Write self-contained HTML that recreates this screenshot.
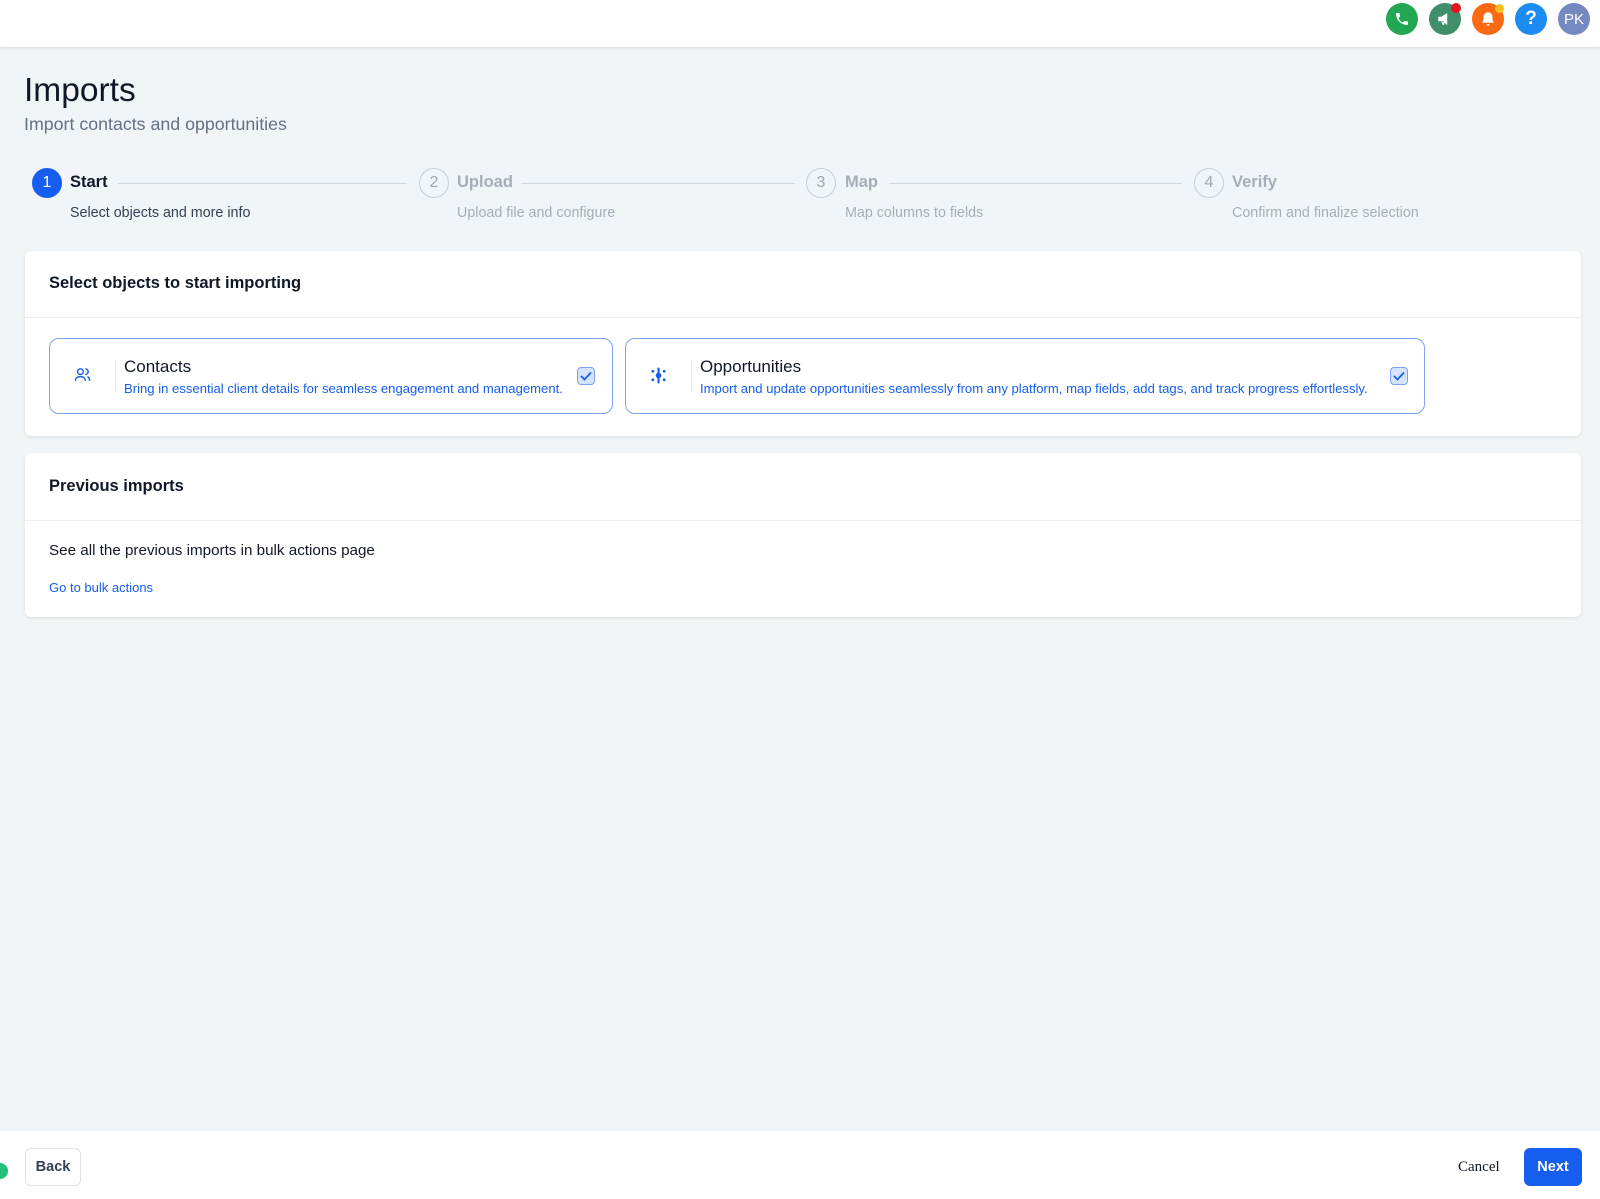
<!DOCTYPE html>
<html><head><meta charset="utf-8"><style>
*{box-sizing:border-box;margin:0;padding:0}
body{width:1600px;height:1199px;background:#f1f5f8;font-family:"Liberation Sans",sans-serif;position:relative;overflow:hidden;color:#101828}
.abs{position:absolute}
.hdr{left:0;top:0;width:1600px;height:47px;background:#fff;box-shadow:0 1px 3px rgba(0,0,0,.12)}
.ic{width:32px;height:32px;border-radius:50%;top:3px;display:flex;align-items:center;justify-content:center;color:#fff}
.step{top:168px;width:30px;height:30px;border-radius:50%;border:1.5px solid #c9ced6;color:#a0a7b2;font-size:16px;display:flex;align-items:center;justify-content:center}
.sl{top:173px;font-size:16.5px;color:#a8aeb8;font-weight:bold}
.ss{top:205px;font-size:14.3px;color:#a8aeb8}
.line{top:183px;height:1px;background:#d3d8de}
.card{background:#fff;border-radius:6px;box-shadow:0 1px 3px rgba(0,0,0,.1);left:25px;width:1556px}
.opt{top:338px;height:76px;border:1.3px solid #7da2f3;border-radius:10px;background:#fff}
.cb{width:18px;height:18px;border:1.3px solid #7da2f3;background:#d6e3fd;border-radius:4px;display:flex;align-items:center;justify-content:center}
</style></head><body>
<div class="abs hdr"></div>
<div class="abs ic" style="left:1386px;background:#22a852"><svg width="16" height="16" viewBox="0 0 24 24"><path fill="#fff" d="M6.6 10.8a15 15 0 006.6 6.6l2.2-2.2c.3-.3.7-.4 1-.2 1.1.4 2.3.6 3.6.6.6 0 1 .4 1 1V20c0 .6-.4 1-1 1A17 17 0 013 4c0-.6.4-1 1-1h3.5c.6 0 1 .4 1 1 0 1.3.2 2.5.6 3.6.1.3 0 .7-.2 1z"/></svg></div>
<div class="abs ic" style="left:1429px;background:#3f8f6b"><svg width="18" height="18" viewBox="0 0 24 24"><path fill="#fff" d="M3 9h4l8-5v16l-8-5H3zM7 15l2 5h2l-1-5z"/></svg></div>
<div class="abs" style="left:1451px;top:3px;width:10px;height:10px;border-radius:50%;background:#e5141f"></div>
<div class="abs ic" style="left:1472px;background:#fb6a10"><svg width="18" height="18" viewBox="0 0 24 24"><path fill="#fff" d="M12 3a6 6 0 00-6 6v5l-2 3h16l-2-3V9a6 6 0 00-6-6zM10 19a2 2 0 004 0z"/></svg></div>
<div class="abs" style="left:1495px;top:4px;width:9px;height:9px;border-radius:50%;background:#fbbf24"></div>
<div class="abs ic" style="left:1515px;background:#1c8cf2;font-weight:bold;font-size:19px">?</div>
<div class="abs ic" style="left:1558px;background:#7489bf;font-size:15px">PK</div>

<div class="abs" style="left:24px;top:72px;font-size:33.5px;color:#101828">Imports</div>
<div class="abs" style="left:24px;top:114px;font-size:17.8px;color:#667085">Import contacts and opportunities</div>

<div class="abs step" style="left:32px;background:#155eef;border-color:#155eef;color:#fff">1</div>
<div class="abs sl" style="left:70px;color:#101828">Start</div>
<div class="abs ss" style="left:70px;color:#344054">Select objects and more info</div>
<div class="abs line" style="left:118px;width:289px"></div>
<div class="abs step" style="left:419px">2</div>
<div class="abs sl" style="left:457px">Upload</div>
<div class="abs ss" style="left:457px">Upload file and configure</div>
<div class="abs line" style="left:521px;width:274px"></div>
<div class="abs step" style="left:806px">3</div>
<div class="abs sl" style="left:845px">Map</div>
<div class="abs ss" style="left:845px">Map columns to fields</div>
<div class="abs line" style="left:889px;width:293px"></div>
<div class="abs step" style="left:1194px">4</div>
<div class="abs sl" style="left:1232px">Verify</div>
<div class="abs ss" style="left:1232px">Confirm and finalize selection</div>

<div class="abs card" style="top:251px;height:185px"></div>
<div class="abs" style="left:49px;top:274px;font-size:16.5px;font-weight:bold;color:#101828">Select objects to start importing</div>
<div class="abs" style="left:25px;top:317px;width:1556px;height:1px;background:#eaecf0"></div>
<div class="abs opt" style="left:49px;width:564px"></div>
<div class="abs" style="left:74px;top:366px"><svg width="17" height="17" viewBox="0 0 24 24" fill="none" stroke="#155eef" stroke-width="2"><circle cx="9" cy="8" r="4"/><path d="M2 21c0-4 3-6 7-6s7 2 7 6M16 4a4 4 0 010 8M19 15c2 1 3 3 3 6"/></svg></div>
<div class="abs" style="left:115px;top:360px;width:1px;height:32px;background:#eaecf0"></div>
<div class="abs" style="left:124px;top:357px;font-size:17px;color:#101828">Contacts</div>
<div class="abs" style="left:124px;top:381px;font-size:13.1px;color:#155eef">Bring in essential client details for seamless engagement and management.</div>
<div class="abs cb" style="left:577px;top:367px"><svg width="12" height="10" viewBox="0 0 12 10"><path d="M1 5l3.5 3.5L11 1.5" fill="none" stroke="#155eef" stroke-width="1.8"/></svg></div>

<div class="abs opt" style="left:625px;width:800px"></div>
<div class="abs" style="left:650px;top:367px"><svg width="17" height="17" viewBox="0 0 24 24" fill="#155eef"><circle cx="12" cy="12" r="4"/><circle cx="4" cy="6" r="2"/><circle cx="20" cy="6" r="2"/><circle cx="4" cy="18" r="2"/><circle cx="20" cy="18" r="2"/><rect x="10.5" y="1" width="3" height="22"/></svg></div>
<div class="abs" style="left:691px;top:360px;width:1px;height:32px;background:#eaecf0"></div>
<div class="abs" style="left:700px;top:357px;font-size:17px;color:#101828">Opportunities</div>
<div class="abs" style="left:700px;top:381px;font-size:13.1px;color:#155eef">Import and update opportunities seamlessly from any platform, map fields, add tags, and track progress effortlessly.</div>
<div class="abs cb" style="left:1390px;top:367px"><svg width="12" height="10" viewBox="0 0 12 10"><path d="M1 5l3.5 3.5L11 1.5" fill="none" stroke="#155eef" stroke-width="1.8"/></svg></div>

<div class="abs card" style="top:453px;height:164px"></div>
<div class="abs" style="left:49px;top:477px;font-size:16.5px;font-weight:bold;color:#101828">Previous imports</div>
<div class="abs" style="left:25px;top:520px;width:1556px;height:1px;background:#eaecf0"></div>
<div class="abs" style="left:49px;top:542px;font-size:15.2px;color:#101828">See all the previous imports in bulk actions page</div>
<div class="abs" style="left:49px;top:580px;font-size:13px;color:#155eef">Go to bulk actions</div>

<div class="abs" style="left:0;top:1131px;width:1600px;height:68px;background:#fff"></div>
<div class="abs" style="left:-8px;top:1163px;width:16px;height:16px;border-radius:50%;background:#22c07a"></div>
<div class="abs" style="left:25px;top:1148px;width:56px;height:38px;border:1px solid #dfe2e8;border-radius:6px;display:flex;align-items:center;justify-content:center;font-size:14.5px;font-weight:bold;color:#344054">Back</div>
<div class="abs" style="left:1458px;top:1159px;font-family:'Liberation Serif',serif;font-size:15px;color:#101828">Cancel</div>
<div class="abs" style="left:1524px;top:1148px;width:58px;height:38px;border-radius:6px;background:#155eef;color:#fff;display:flex;align-items:center;justify-content:center;font-size:14.5px;font-weight:bold">Next</div>
</body></html>
